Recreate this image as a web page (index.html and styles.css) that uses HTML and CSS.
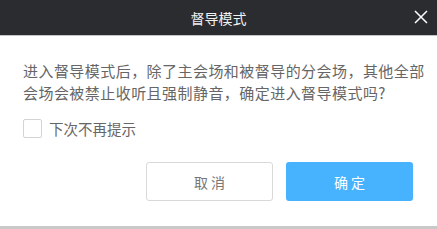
FILE: index.html
```html
<!DOCTYPE html>
<html lang="zh-CN">
<head>
    <meta charset="UTF-8">
    <title>督导模式</title>
    <link rel="stylesheet" href="styles.css">
</head>
<body>
    <div class="dialog">
        <div class="dialog-header">
            <span class="dialog-title">督导模式</span>
            <span class="dialog-close">
                <svg width="14" height="14" viewBox="0 0 14 14"><path d="M1 1L13 13M13 1L1 13" stroke="#fff" stroke-width="1.5" fill="none"/></svg>
            </span>
        </div>
        <div class="dialog-body">
            <p class="message">进入督导模式后，除了主会场和被督导的分会场，其他全部<br>会场会被禁止收听且强制静音，确定进入督导模式吗?</p>
            <label class="remember">
                <span class="checkbox"></span>
                下次不再提示
            </label>
        </div>
        <div class="dialog-footer">
            <button class="btn btn-cancel">取 消</button>
            <button class="btn btn-ok">确 定</button>
        </div>
    </div>
</body>
</html>
```

FILE: styles.css
```css
body {
    margin: 0;
    padding: 0;
    background-color: #fff;
    font-family: "Noto Sans CJK SC", "Liberation Sans", sans-serif;
}

.dialog {
    width: 437px;
    height: 229px;
    background-color: #fff;
    display: flex;
    flex-direction: column;
    border-bottom: 3px solid #c9c9c9;
    box-sizing: border-box;
    position: relative;
}

.dialog-header {
    height: 35px;
    background-color: #2b2c30;
    border-bottom: 1px solid #c5c5c7;
    display: flex;
    align-items: center;
    justify-content: center;
    position: relative;
}

.dialog-title {
    color: #f2f2f2;
    font-size: 14px;
}

.dialog-close {
    position: absolute;
    right: 9px;
    top: 10px;
    width: 14px;
    height: 14px;
    line-height: 0;
}

.dialog-body {
    padding: 24px 10px 0 23px;
}

.message {
    margin: 0;
    font-size: 15px;
    line-height: 22px;
    color: #666;
    letter-spacing: 0.45px;
    white-space: nowrap;
}

.remember {
    display: flex;
    align-items: center;
    margin-top: 14px;
    font-size: 14.5px;
    color: #666;
}

.checkbox {
    width: 17px;
    height: 17px;
    border: 1px solid #d4d4d4;
    border-radius: 2px;
    margin-right: 7px;
}

.dialog-footer {
    display: flex;
    justify-content: flex-end;
    gap: 13px;
    padding: 0 24px;
    margin-top: 23px;
}

.btn {
    width: 127px;
    height: 39px;
    border-radius: 3px;
    font-family: "Noto Sans CJK SC", "Liberation Sans", sans-serif;
    font-size: 14px;
    cursor: pointer;
}

.btn-cancel {
    background-color: #fff;
    border: 1px solid #d9d9d9;
    color: #777;
}

.btn-ok {
    background-color: #47b3ff;
    border: none;
    color: #fff;
}
```
